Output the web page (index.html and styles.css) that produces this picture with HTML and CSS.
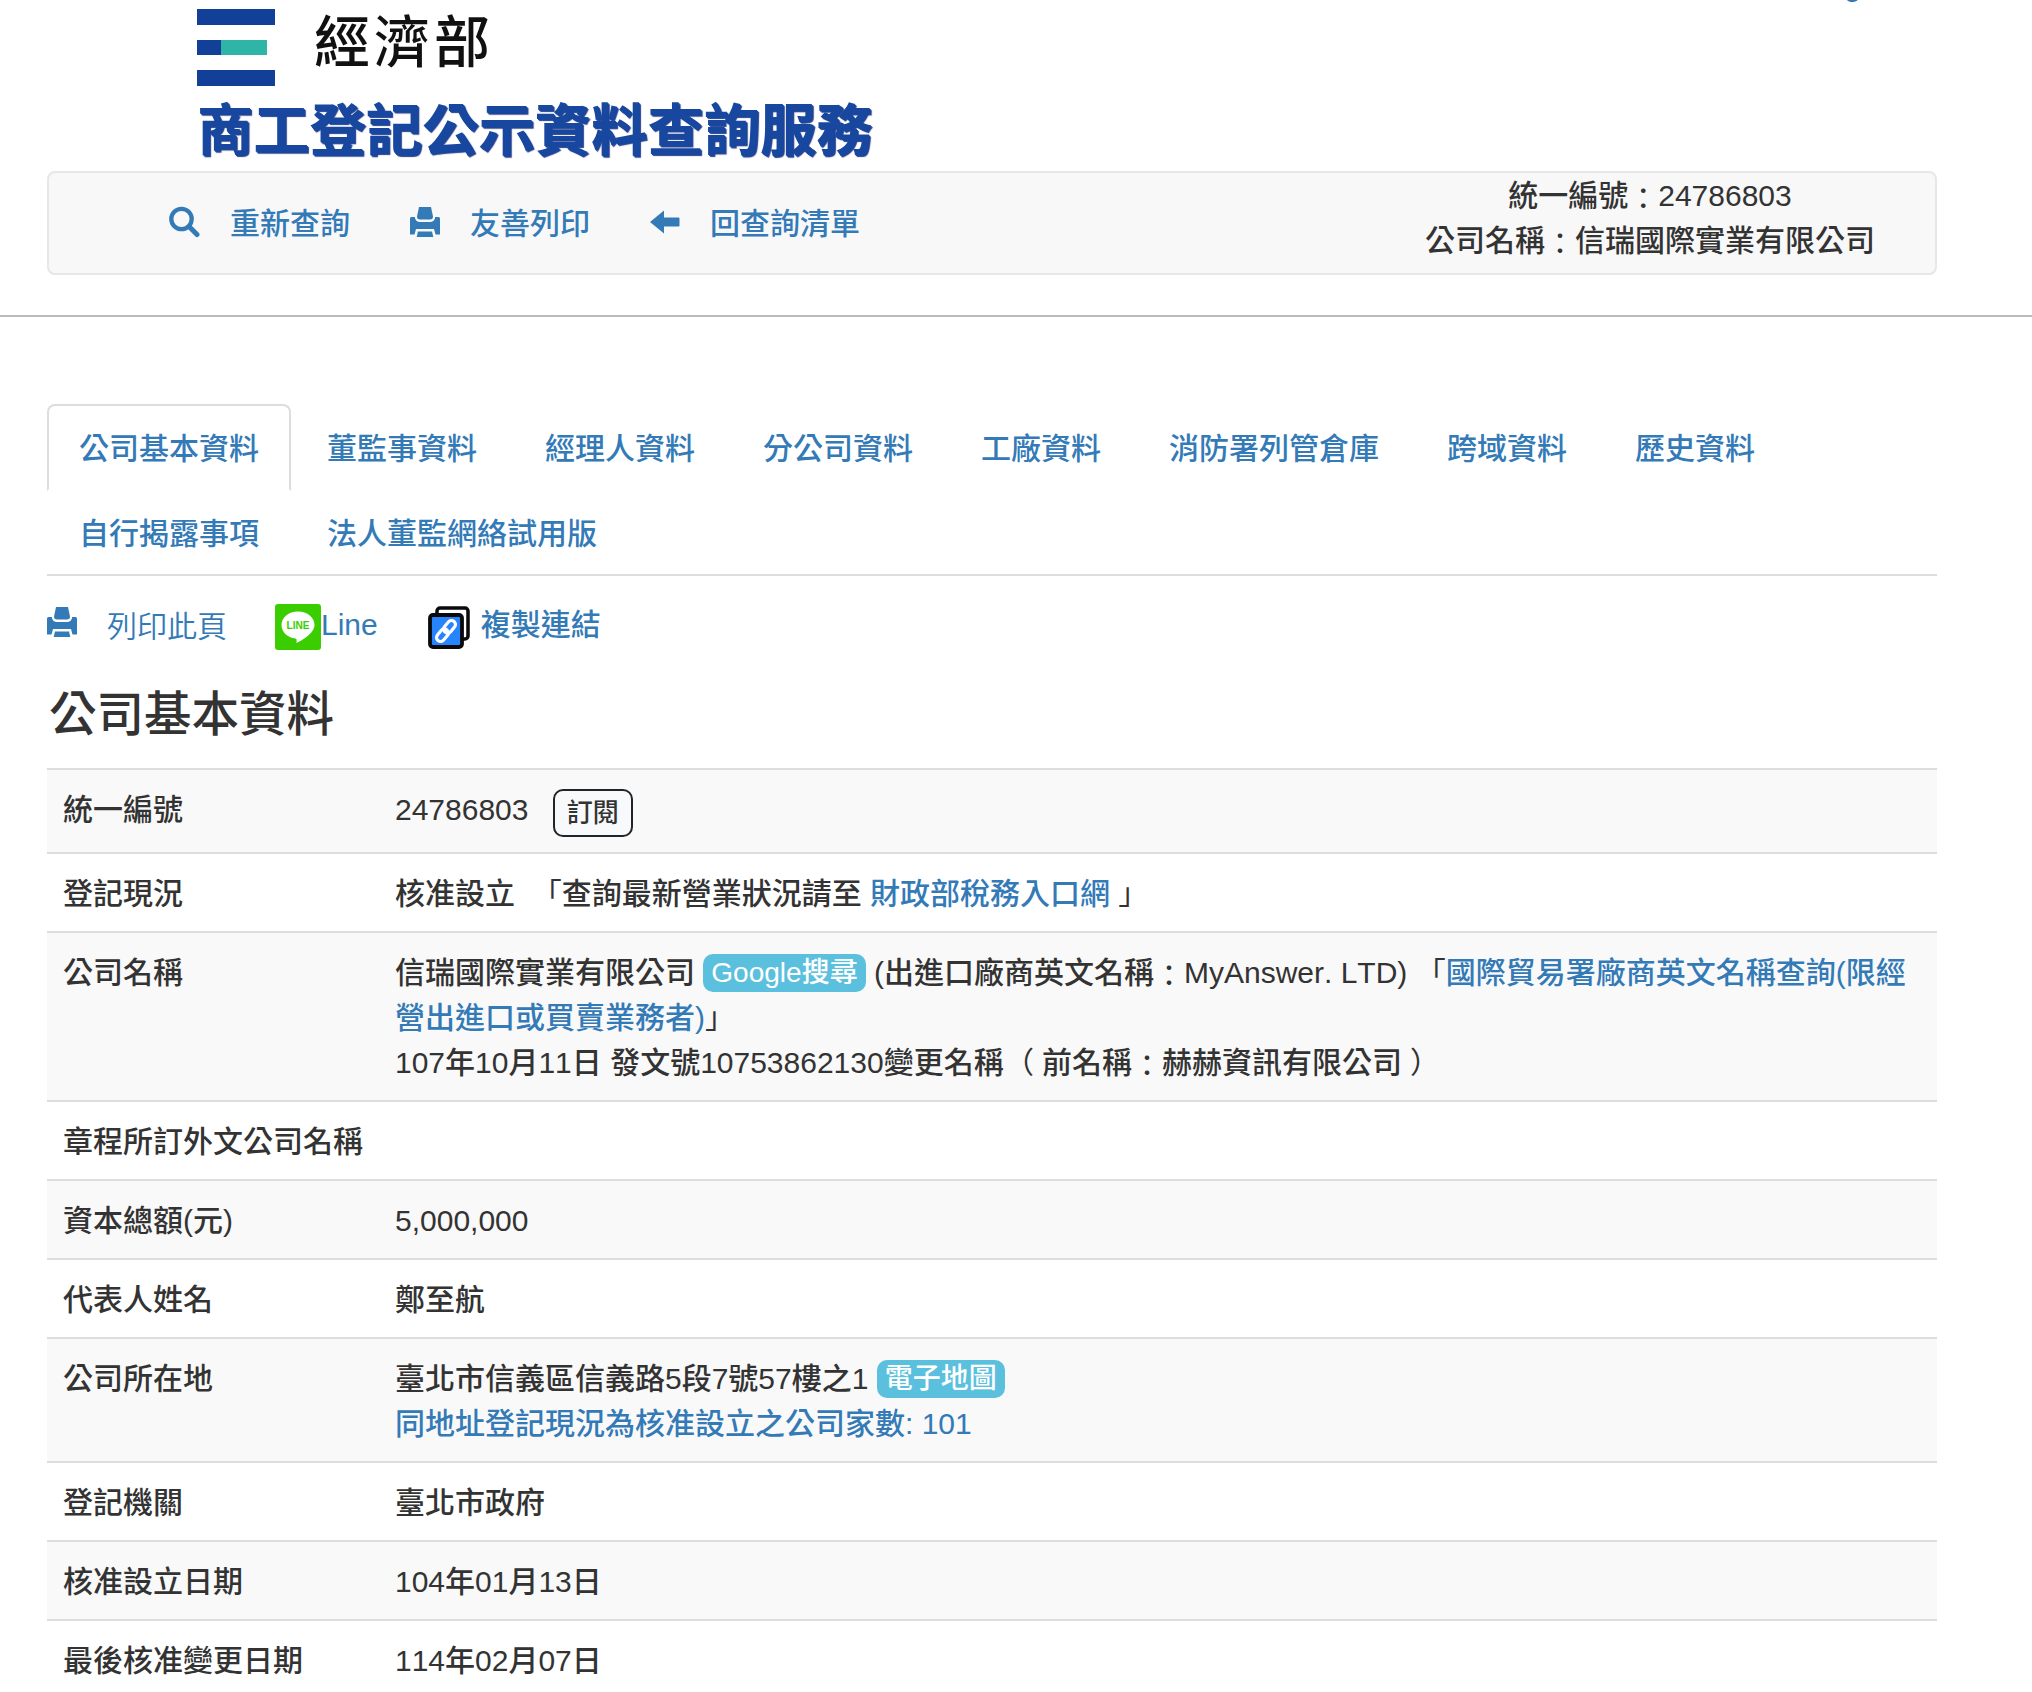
FILE: index.html
```html
<!DOCTYPE html>
<html lang="zh-Hant-TW">
<head>
    <meta charset="UTF-8">
    <title>商工登記公示資料查詢服務</title>
    <meta name="viewport" content="width=device-width, initial-scale=1.0">
    <link rel="stylesheet" href="styles.css">
</head>
<body>
    <!-- 列印圖示，頁面共用 -->
    <svg class="symbols" width="0" height="0">
        <symbol id="icon-print" viewBox="0 0 30 30">
            <path d="M9 0h12l2 9.500q0 3-3 3h-10q-3 0-3-3z"/>
            <path d="M0 11.500q0-1.500 1.500-1.500H5v1.500q1 3 4 3.500h12q3-.5 4-3.500V10h3.500q1.500 0 1.500 1.500V27.500h-4.500L24 22H6l-1.500 5.500H0z"/>
            <path d="M8 24.500h14l1.300 5.500H6.700z"/>
        </symbol>
    </svg>

    <header class="header">
        <div class="container">
            <div class="top">
                <div class="brand">
                    <div class="ministry">
                        <svg class="logo" width="78" height="78" viewBox="0 0 78 78">
                            <rect width="78" height="16" fill="#123f98"/>
                            <rect y="31" width="24" height="15" fill="#123f98"/>
                            <rect x="24" y="31" width="46" height="15" fill="#2fb5a8"/>
                            <rect y="61" width="78" height="16" fill="#123f98"/>
                        </svg>
                        <span class="ministry-name">經濟部</span>
                    </div>
                    <div class="site-name">商工登記公示資料查詢服務</div>
                </div>
                <a class="lang" href="#">English</a>
            </div>
            <nav class="toolbar">
                <div class="toolbar-links">
                    <a href="#">
                        <svg class="icon" width="32" height="32" viewBox="0 0 32 32">
                            <circle cx="13.500" cy="13" r="10.200" fill="none" stroke="currentColor" stroke-width="4.300"/>
                            <path d="M21 20.500l8 8" stroke="currentColor" stroke-width="5" stroke-linecap="round"/>
                        </svg>
                        <span>重新查詢</span>
                    </a>
                    <a href="#">
                        <svg class="icon" width="30" height="30"><use href="#icon-print"/></svg>
                        <span>友善列印</span>
                    </a>
                    <a href="#">
                        <svg class="icon" width="30" height="30" viewBox="0 0 30 30">
                            <path d="M0 15L14 3.500V10.500H28.500q1 0 1 1V18.500q0 1-1 1H14V26.500z"/>
                        </svg>
                        <span>回查詢清單</span>
                    </a>
                </div>
                <div class="company">
                    <div>統一編號<span class="colon">：</span>24786803</div>
                    <div>公司名稱<span class="colon">：</span>信瑞國際實業有限公司</div>
                </div>
            </nav>
        </div>
    </header>

    <main class="container">
        <ul class="tabs">
            <li class="active"><a href="#">公司基本資料</a></li>
            <li><a href="#">董監事資料</a></li>
            <li><a href="#">經理人資料</a></li>
            <li><a href="#">分公司資料</a></li>
            <li><a href="#">工廠資料</a></li>
            <li><a href="#">消防署列管倉庫</a></li>
            <li><a href="#">跨域資料</a></li>
            <li><a href="#">歷史資料</a></li>
            <li><a href="#">自行揭露事項</a></li>
            <li><a href="#">法人董監網絡試用版</a></li>
        </ul>

        <div class="share">
            <a class="share-print" href="#">
                <svg class="icon" width="30" height="30"><use href="#icon-print"/></svg>
                <span>列印此頁</span>
            </a>
            <a class="share-line" href="#">
                <svg width="46" height="46" viewBox="0 0 46 46">
                    <rect width="46" height="46" rx="3" fill="#3ace01"/>
                    <path d="M23 7.500C13.500 7.500 6.500 13.500 6.500 21c0 6.800 5.500 12.500 14 13.500 1.500.3 1.200 1.800.9 4.500 5-2.300 18.100-9.500 18.100-18C39.500 13.500 32.500 7.500 23 7.500z" fill="#fff"/>
                    <text class="line-text" x="23" y="25" text-anchor="middle" textLength="23" lengthAdjust="spacingAndGlyphs">LINE</text>
                </svg>
                <span>Line</span>
            </a>
            <a class="share-copy" href="#">
                <svg width="42" height="43" viewBox="0 0 42 43" fill="none">
                    <rect x="9" y="2" width="31" height="31" rx="3" fill="#fff" stroke="#0a0a0a" stroke-width="3.500"/>
                    <rect x="2" y="9" width="32" height="32" rx="3" fill="#2684ff" stroke="#0a0a0a" stroke-width="3.800"/>
                    <g stroke="#fff" stroke-width="3.200" transform="rotate(-50 18 25)">
                        <rect x="5.500" y="21" width="14" height="8" rx="4"/>
                        <rect x="16.500" y="21" width="14" height="8" rx="4"/>
                    </g>
                </svg>
                <span>複製連結</span>
            </a>
        </div>

        <h3 class="title">公司基本資料</h3>

        <table class="info">
            <tr class="row-id">
                <th>統一編號</th>
                <td>24786803 <button class="subscribe" type="button">訂閱</button></td>
            </tr>
            <tr>
                <th>登記現況</th>
                <td>核准設立&nbsp; <span class="quote">「</span>查詢最新營業狀況請至 <a href="#">財政部稅務入口網</a> <span class="quote">」</span></td>
            </tr>
            <tr>
                <th>公司名稱</th>
                <td>
                    信瑞國際實業有限公司 <a class="label" href="#">Google搜尋</a> (出進口廠商英文名稱<span class="colon">：</span>MyAnswer. LTD) <span class="quote">「</span><a href="#">國際貿易署廠商英文名稱查詢(限經營出進口或買賣業務者)</a><span class="quote">」</span><br>
                    107年10月11日 發文號10753862130變更名稱 <span class="paren-open">（</span>前名稱<span class="colon">：</span>赫赫資訊有限公司<span class="paren-close">）</span>
                </td>
            </tr>
            <tr>
                <th>章程所訂外文公司名稱</th>
                <td></td>
            </tr>
            <tr>
                <th>資本總額(元)</th>
                <td>5,000,000</td>
            </tr>
            <tr>
                <th>代表人姓名</th>
                <td>鄭至航</td>
            </tr>
            <tr>
                <th>公司所在地</th>
                <td>
                    臺北市信義區信義路5段7號57樓之1 <a class="label" href="#">電子地圖</a><br>
                    <a href="#">同地址登記現況為核准設立之公司家數: 101</a>
                </td>
            </tr>
            <tr>
                <th>登記機關</th>
                <td>臺北市政府</td>
            </tr>
            <tr>
                <th>核准設立日期</th>
                <td>104年01月13日</td>
            </tr>
            <tr>
                <th>最後核准變更日期</th>
                <td>114年02月07日</td>
            </tr>
        </table>
    </main>
</body>
</html>
```

FILE: styles.css
```css
* {
    box-sizing: border-box;
}
body {
    margin: 0;
    height: 1692px;
    overflow: hidden;
    background-color: #fff;
    color: #333;
    font-family: "Liberation Sans", "Noto Sans CJK TC", sans-serif;
    font-size: 30px;
    font-weight: 500;
    font-kerning: none;
    line-height: 45px;
}
a {
    color: #337ab7;
    text-decoration: none;
}
.symbols {
    display: block;
}
.icon {
    fill: currentColor;
    flex: none;
}
.container {
    width: 1890px;
    margin-left: 47px;
}

/* 頁首 */
.header {
    height: 317px;
    border-bottom: 2px solid #bbb;
}
.top {
    display: flex;
    justify-content: space-between;
    height: 171px;
    padding-left: 150px;
}
.brand {
    padding-top: 9px;
}
.ministry {
    display: flex;
    height: 78px;
}
.ministry-name {
    margin-left: 39px;
    color: #111;
    font-size: 56px;
    line-height: 68px;
    letter-spacing: 4px;
}
.site-name {
    color: #17479e;
    font-size: 56px;
    font-weight: 700;
    line-height: 88px;
    letter-spacing: 0.3px;
    text-shadow: 1px 1px 0 #17479e, 2px 2px 1px #2a3f8c;
}
.lang {
    margin-top: -37px;
    margin-right: 31px;
}
.toolbar {
    display: flex;
    justify-content: space-between;
    height: 104px;
    border: 2px solid #e7e7e7;
    border-radius: 8px;
    background-color: #f8f8f8;
}
.toolbar-links {
    display: flex;
    align-items: center;
    gap: 60px;
    padding-left: 119px;
}
.toolbar-links a {
    display: flex;
    align-items: center;
    gap: 30px;
}
.toolbar-links .icon {
    margin-top: -2px;
}
.company {
    padding-right: 60px;
    text-align: center;
}

/* 頁籤 */
.tabs {
    display: flex;
    flex-wrap: wrap;
    margin: 87px 0 0;
    padding: 0;
    list-style: none;
    border-bottom: 2px solid #ddd;
}
.tabs li {
    margin-bottom: -2px;
}
.tabs a {
    display: block;
    margin-right: 4px;
    padding: 20px 30px 18px;
    border: 2px solid transparent;
    border-radius: 8px 8px 0 0;
}
.tabs .active a {
    border-color: #ddd;
    border-bottom-color: transparent;
}

/* 分享 */
.share {
    display: flex;
    height: 46px;
    margin-top: 28px;
}
.share a {
    display: flex;
}
.share-print {
    margin-right: 48px;
    padding-top: 3px;
    font-weight: 350;
}
.share-print span {
    margin: -3px 0 0 30px;
}
.share-line span {
    margin-top: -2px;
}
.share-copy {
    margin-left: 50px;
}
.share-copy svg {
    margin-top: 2px;
}
.share-copy span {
    margin: -2px 0 0 11px;
}
.line-text {
    fill: #3ace01;
    font-size: 10px;
    font-weight: bold;
}
.title {
    margin: 37px 0 26px 2px;
    font-size: 47.5px;
    font-weight: 500;
    line-height: 55px;
}

/* 資料表 */
.info {
    width: 100%;
    border-spacing: 0;
    table-layout: fixed;
}
.info th,
.info td {
    padding: 17px 16px 15px;
    border-top: 2px solid #ddd;
    font-weight: 500;
    text-align: left;
    vertical-align: top;
}
.info th {
    width: 332px;
}
.info tr:nth-child(odd) {
    background-color: #f9f9f9;
}
.info .row-id {
    height: 84px;
}
.row-id td {
    padding-bottom: 0;
}
.subscribe {
    height: 48px;
    margin: 0 0 0 16px;
    padding: 0 12px;
    border: 2px solid #212529;
    border-radius: 10px;
    background-color: #f8f9fa;
    color: #333;
    font: inherit;
    font-size: 26px;
    line-height: 44px;
    vertical-align: -2px;
}
.label {
    display: inline-block;
    height: 38px;
    padding: 0 8px;
    border-radius: 10px;
    background-color: #5bc0de;
    color: #fff;
    font-size: 28px;
    line-height: 38px;
    vertical-align: 1px;
}

/* 全形標點微調 */
.quote {
    font-weight: 400;
}
.colon {
    position: relative;
    top: 3px;
    font-weight: 400;
}
.paren-open,
.paren-close {
    position: relative;
    left: -8px;
    font-weight: 400;
}
.paren-close {
    left: 8px;
}
```
